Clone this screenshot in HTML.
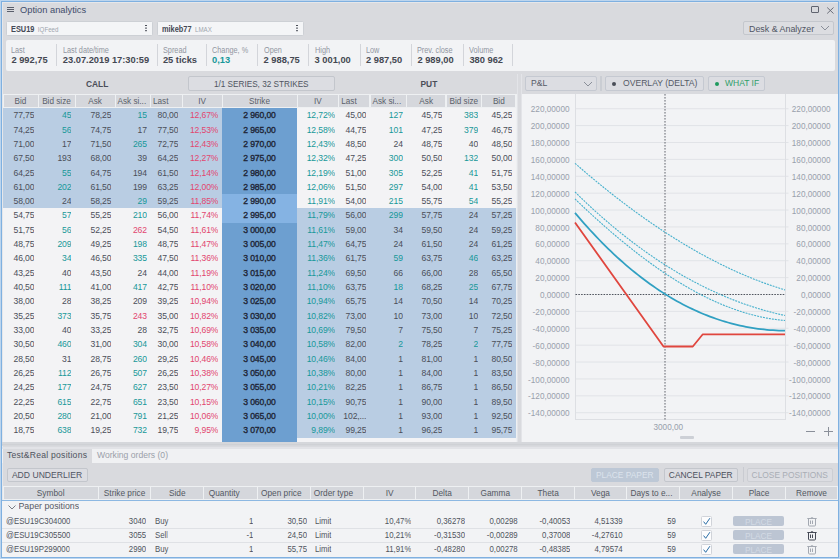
<!DOCTYPE html><html><head><meta charset="utf-8"><style>
*{margin:0;padding:0;box-sizing:border-box}
html,body{width:840px;height:559px;overflow:hidden;background:#d9dade;font-family:"Liberation Sans",sans-serif;color:#4b4f59}
.a{position:absolute}
.d{position:absolute;font-size:8.6px;letter-spacing:-0.12px;line-height:14.3px;height:14.3px;padding-top:0.2px;white-space:nowrap;overflow:hidden}
.h{position:absolute;font-size:8.2px;line-height:13px;height:12px;white-space:nowrap;overflow:hidden;color:#5a5f6a;text-align:center;background:#d5d7dc;}
.sl{position:absolute;font-size:8.3px;color:#9196a1;white-space:nowrap;transform:scaleX(0.88);transform-origin:left}
.sv{position:absolute;font-size:9.3px;font-weight:bold;color:#444852;white-space:nowrap}
.sep{position:absolute;width:1px;background:#d3d5da}
.btn{position:absolute;border:1px solid #c3c6cc;border-radius:2px;background:#dcdde2;font-size:8px;white-space:nowrap;text-align:center;color:#4f5460}
.ax{position:absolute;font-size:8.2px;color:#98a0ac;white-space:nowrap;line-height:10px}
.pd{position:absolute;font-size:8.6px;line-height:14px;height:14px;padding-top:0px;transform:scaleX(0.91);white-space:nowrap;overflow:hidden;color:#4f535d}
.ph{position:absolute;font-size:8.3px;line-height:12.5px;height:12.5px;white-space:nowrap;overflow:hidden;color:#535862;text-align:center;background:#d5d7dc}
</style></head><body>
<div class="a" style="left:0;top:0;width:840px;height:559px;border:1px solid #bcd5ee;"></div>
<div class="a" style="left:1px;top:1px;width:838px;height:557px;border:1px solid #7fb0e0;"></div>
<div class="a" style="left:2px;top:2px;width:836px;height:555px;border-left:1px solid #e6e7ea;border-top:1px solid #e6e7ea"></div>
<div class="a" style="left:7.2px;top:6.8px;width:6.7px;height:1px;background:#595e6b"></div>
<div class="a" style="left:7.2px;top:9px;width:6.7px;height:1px;background:#595e6b"></div>
<div class="a" style="left:7.2px;top:11px;width:6.7px;height:1px;background:#595e6b"></div>
<div class="a" style="left:20px;top:4px;font-size:9.3px;line-height:12px;color:#3f4d6b;white-space:nowrap">Option analytics</div>
<div class="a" style="left:811px;top:6px;width:7.5px;height:7.3px;border:1px solid #60646f;border-radius:1px"></div>
<svg class="a" style="left:826px;top:5.5px" width="9" height="9" viewBox="0 0 9 9"><path d="M1.2 1.5L7.5 7.5M7.5 1.5L1.2 7.5" stroke="#60646f" stroke-width="0.9"/></svg>
<div class="a" style="left:6.0px;top:21px;width:147.0px;height:15px;background:#f4f5f7;border:1px solid #cdd0d5;border-radius:1.5px"></div>
<div class="a" style="left:10.7px;top:23px;font-size:8.6px;line-height:12.5px;font-weight:bold;color:#454955;white-space:nowrap;transform:scaleX(0.86);transform-origin:left">ESU19<span style="font-weight:normal;font-size:7.2px;color:#a0a5ae;margin-left:4px">IQFeed</span></div>
<div class="a" style="left:145.0px;top:24.5px;width:1.5px;height:1.5px;background:#4a4e58;box-shadow:0 2.6px 0 #4a4e58,0 5.2px 0 #4a4e58"></div>
<div class="a" style="left:157.0px;top:21px;width:147.0px;height:15px;background:#f4f5f7;border:1px solid #cdd0d5;border-radius:1.5px"></div>
<div class="a" style="left:161.7px;top:23px;font-size:8.6px;line-height:12.5px;font-weight:bold;color:#454955;white-space:nowrap;transform:scaleX(0.86);transform-origin:left">mikeb77<span style="font-weight:normal;font-size:7.2px;color:#a0a5ae;margin-left:4px">LMAX</span></div>
<div class="a" style="left:296.0px;top:24.5px;width:1.5px;height:1.5px;background:#4a4e58;box-shadow:0 2.6px 0 #4a4e58,0 5.2px 0 #4a4e58"></div>
<div class="a" style="left:743px;top:21px;width:91px;height:14px;border:1px solid #c4c7cd;border-radius:2px;background:#dcdde1"></div>
<div class="a" style="left:749px;top:23.8px;font-size:8.9px;line-height:11px;color:#505563;white-space:nowrap">Desk &amp; Analyzer</div>
<svg class="a" style="left:820px;top:25px" width="10" height="6" viewBox="0 0 10 6"><path d="M1 1L5 5L9 1" fill="none" stroke="#8a8f99" stroke-width="1"/></svg>
<div class="a" style="left:5.5px;top:40px;width:829px;height:31px;background:#f2f3f5;border-radius:2px"></div>
<div class="sl" style="left:11.4px;top:45.7px;line-height:9px">Last</div>
<div class="sv" style="left:11.4px;top:54.5px;line-height:11px;">2 992,75</div>
<div class="sl" style="left:62.8px;top:45.7px;line-height:9px">Last date/time</div>
<div class="sv" style="left:62.8px;top:54.5px;line-height:11px;">23.07.2019 17:30:59</div>
<div class="sl" style="left:162.9px;top:45.7px;line-height:9px">Spread</div>
<div class="sv" style="left:162.9px;top:54.5px;line-height:11px;">25 ticks</div>
<div class="sl" style="left:212.1px;top:45.7px;line-height:9px">Change, %</div>
<div class="sv" style="left:212.1px;top:54.5px;line-height:11px;color:#179899;">0,13</div>
<div class="sl" style="left:263.6px;top:45.7px;line-height:9px">Open</div>
<div class="sv" style="left:263.6px;top:54.5px;line-height:11px;">2 988,75</div>
<div class="sl" style="left:314.6px;top:45.7px;line-height:9px">High</div>
<div class="sv" style="left:314.6px;top:54.5px;line-height:11px;">3 001,00</div>
<div class="sl" style="left:366px;top:45.7px;line-height:9px">Low</div>
<div class="sv" style="left:366px;top:54.5px;line-height:11px;">2 987,50</div>
<div class="sl" style="left:417.4px;top:45.7px;line-height:9px">Prev. close</div>
<div class="sv" style="left:417.4px;top:54.5px;line-height:11px;">2 989,00</div>
<div class="sl" style="left:469.4px;top:45.7px;line-height:9px">Volume</div>
<div class="sv" style="left:469.4px;top:54.5px;line-height:11px;">380 962</div>
<div class="sep" style="left:56.3px;top:44px;height:22px"></div>
<div class="sep" style="left:157.0px;top:44px;height:22px"></div>
<div class="sep" style="left:205.9px;top:44px;height:22px"></div>
<div class="sep" style="left:256.6px;top:44px;height:22px"></div>
<div class="sep" style="left:308.1px;top:44px;height:22px"></div>
<div class="sep" style="left:359.5px;top:44px;height:22px"></div>
<div class="sep" style="left:410.9px;top:44px;height:22px"></div>
<div class="sep" style="left:463.0px;top:44px;height:22px"></div>
<div class="sep" style="left:512.4px;top:44px;height:22px"></div>
<div class="a" style="left:86px;top:79px;font-size:8.4px;line-height:11px;font-weight:bold;color:#4a4e58">CALL</div>
<div class="btn" style="left:188px;top:76px;width:146.5px;height:14.5px;line-height:14px;padding-top:1px;font-size:8.2px">1/1 SERIES, 32 STRIKES</div>
<div class="a" style="left:420.5px;top:79px;font-size:8.4px;line-height:11px;font-weight:bold;color:#4a4e58">PUT</div>
<div class="a" style="left:3px;top:94px;width:514px;height:14px;background:#eef0f2"></div>
<div class="h" style="left:3.5px;width:34.0px;top:95px;text-align:center;">Bid</div>
<div class="h" style="left:38.5px;width:36.0px;top:95px;text-align:center;">Bid size</div>
<div class="h" style="left:75.5px;width:39.0px;top:95px;text-align:center;">Ask</div>
<div class="h" style="left:115.5px;width:34.5px;top:95px;text-align:left;padding-left:2px;">Ask si...</div>
<div class="h" style="left:151.0px;width:30.5px;top:95px;text-align:left;padding-left:2px;">Last</div>
<div class="h" style="left:182.5px;width:39.0px;top:95px;text-align:center;">IV</div>
<div class="h" style="left:222.5px;width:74.0px;top:95px;text-align:center;">Strike</div>
<div class="h" style="left:297.5px;width:40.7px;top:95px;text-align:center;">IV</div>
<div class="h" style="left:339.2px;width:30.3px;top:95px;text-align:left;padding-left:2px;">Last</div>
<div class="h" style="left:370.5px;width:35.4px;top:95px;text-align:left;padding-left:2px;">Ask si...</div>
<div class="h" style="left:406.9px;width:38.6px;top:95px;text-align:center;">Ask</div>
<div class="h" style="left:446.5px;width:34.7px;top:95px;text-align:center;">Bid size</div>
<div class="h" style="left:482.2px;width:33.3px;top:95px;text-align:center;">Bid</div>
<div class="a" style="left:3px;top:108.0px;width:514px;height:334.2px;background:#f3f3f5"></div>
<div class="a" style="left:3px;top:108.0px;width:219px;height:100.31px;background:#b9cde3"></div>
<div class="a" style="left:297px;top:208.31px;width:219px;height:229.28px;background:#b9cde3"></div>
<div class="a" style="left:222px;top:108.0px;width:75px;height:334.2px;background:#6d9fd0"></div>
<div class="a" style="left:222px;top:193.98px;width:75px;height:28.66px;background:#85b3e3"></div>
<div class="a" style="left:516px;top:94px;width:1px;height:348px;background:#eef0f2"></div>
<div class="d" style="left:3.0px;width:31.4px;top:108.00px;text-align:right;color:#4b4f59;">77,75</div>
<div class="d" style="left:38.0px;width:33.4px;top:108.00px;text-align:right;color:#179899;">45</div>
<div class="d" style="left:75.0px;width:36.4px;top:108.00px;text-align:right;color:#4b4f59;">78,25</div>
<div class="d" style="left:115.0px;width:31.9px;top:108.00px;text-align:right;color:#179899;">15</div>
<div class="d" style="left:150.5px;width:27.9px;top:108.00px;text-align:right;color:#4b4f59;">80,00</div>
<div class="d" style="left:182.0px;width:36.4px;top:108.00px;text-align:right;color:#e2466f;">12,67%</div>
<div class="d" style="left:222.0px;width:75.0px;top:108.00px;text-align:center;color:#1e2535;-webkit-text-stroke:0.35px #1e2535">2 960,00</div>
<div class="d" style="left:297.0px;width:38.1px;top:108.00px;text-align:right;color:#179899;">12,72%</div>
<div class="d" style="left:338.7px;width:27.7px;top:108.00px;text-align:right;color:#4b4f59;">45,00</div>
<div class="d" style="left:370.0px;width:32.8px;top:108.00px;text-align:right;color:#179899;">127</div>
<div class="d" style="left:406.4px;width:36.0px;top:108.00px;text-align:right;color:#4b4f59;">45,75</div>
<div class="d" style="left:446.0px;width:32.1px;top:108.00px;text-align:right;color:#179899;">383</div>
<div class="d" style="left:481.7px;width:30.7px;top:108.00px;text-align:right;color:#4b4f59;">45,25</div>
<div class="d" style="left:3.0px;width:31.4px;top:122.33px;text-align:right;color:#4b4f59;">74,25</div>
<div class="d" style="left:38.0px;width:33.4px;top:122.33px;text-align:right;color:#179899;">56</div>
<div class="d" style="left:75.0px;width:36.4px;top:122.33px;text-align:right;color:#4b4f59;">74,75</div>
<div class="d" style="left:115.0px;width:31.9px;top:122.33px;text-align:right;color:#4b4f59;">17</div>
<div class="d" style="left:150.5px;width:27.9px;top:122.33px;text-align:right;color:#4b4f59;">77,50</div>
<div class="d" style="left:182.0px;width:36.4px;top:122.33px;text-align:right;color:#e2466f;">12,53%</div>
<div class="d" style="left:222.0px;width:75.0px;top:122.33px;text-align:center;color:#1e2535;-webkit-text-stroke:0.35px #1e2535">2 965,00</div>
<div class="d" style="left:297.0px;width:38.1px;top:122.33px;text-align:right;color:#179899;">12,58%</div>
<div class="d" style="left:338.7px;width:27.7px;top:122.33px;text-align:right;color:#4b4f59;">44,75</div>
<div class="d" style="left:370.0px;width:32.8px;top:122.33px;text-align:right;color:#179899;">101</div>
<div class="d" style="left:406.4px;width:36.0px;top:122.33px;text-align:right;color:#4b4f59;">47,25</div>
<div class="d" style="left:446.0px;width:32.1px;top:122.33px;text-align:right;color:#179899;">379</div>
<div class="d" style="left:481.7px;width:30.7px;top:122.33px;text-align:right;color:#4b4f59;">46,75</div>
<div class="d" style="left:3.0px;width:31.4px;top:136.66px;text-align:right;color:#4b4f59;">71,00</div>
<div class="d" style="left:38.0px;width:33.4px;top:136.66px;text-align:right;color:#4b4f59;">17</div>
<div class="d" style="left:75.0px;width:36.4px;top:136.66px;text-align:right;color:#4b4f59;">71,50</div>
<div class="d" style="left:115.0px;width:31.9px;top:136.66px;text-align:right;color:#179899;">265</div>
<div class="d" style="left:150.5px;width:27.9px;top:136.66px;text-align:right;color:#4b4f59;">72,75</div>
<div class="d" style="left:182.0px;width:36.4px;top:136.66px;text-align:right;color:#e2466f;">12,43%</div>
<div class="d" style="left:222.0px;width:75.0px;top:136.66px;text-align:center;color:#1e2535;-webkit-text-stroke:0.35px #1e2535">2 970,00</div>
<div class="d" style="left:297.0px;width:38.1px;top:136.66px;text-align:right;color:#179899;">12,43%</div>
<div class="d" style="left:338.7px;width:27.7px;top:136.66px;text-align:right;color:#4b4f59;">48,50</div>
<div class="d" style="left:370.0px;width:32.8px;top:136.66px;text-align:right;color:#4b4f59;">24</div>
<div class="d" style="left:406.4px;width:36.0px;top:136.66px;text-align:right;color:#4b4f59;">48,75</div>
<div class="d" style="left:446.0px;width:32.1px;top:136.66px;text-align:right;color:#4b4f59;">40</div>
<div class="d" style="left:481.7px;width:30.7px;top:136.66px;text-align:right;color:#4b4f59;">48,50</div>
<div class="d" style="left:3.0px;width:31.4px;top:150.99px;text-align:right;color:#4b4f59;">67,50</div>
<div class="d" style="left:38.0px;width:33.4px;top:150.99px;text-align:right;color:#4b4f59;">193</div>
<div class="d" style="left:75.0px;width:36.4px;top:150.99px;text-align:right;color:#4b4f59;">68,00</div>
<div class="d" style="left:115.0px;width:31.9px;top:150.99px;text-align:right;color:#4b4f59;">39</div>
<div class="d" style="left:150.5px;width:27.9px;top:150.99px;text-align:right;color:#4b4f59;">64,25</div>
<div class="d" style="left:182.0px;width:36.4px;top:150.99px;text-align:right;color:#e2466f;">12,27%</div>
<div class="d" style="left:222.0px;width:75.0px;top:150.99px;text-align:center;color:#1e2535;-webkit-text-stroke:0.35px #1e2535">2 975,00</div>
<div class="d" style="left:297.0px;width:38.1px;top:150.99px;text-align:right;color:#179899;">12,32%</div>
<div class="d" style="left:338.7px;width:27.7px;top:150.99px;text-align:right;color:#4b4f59;">47,25</div>
<div class="d" style="left:370.0px;width:32.8px;top:150.99px;text-align:right;color:#179899;">300</div>
<div class="d" style="left:406.4px;width:36.0px;top:150.99px;text-align:right;color:#4b4f59;">50,50</div>
<div class="d" style="left:446.0px;width:32.1px;top:150.99px;text-align:right;color:#179899;">132</div>
<div class="d" style="left:481.7px;width:30.7px;top:150.99px;text-align:right;color:#4b4f59;">50,00</div>
<div class="d" style="left:3.0px;width:31.4px;top:165.32px;text-align:right;color:#4b4f59;">64,25</div>
<div class="d" style="left:38.0px;width:33.4px;top:165.32px;text-align:right;color:#179899;">55</div>
<div class="d" style="left:75.0px;width:36.4px;top:165.32px;text-align:right;color:#4b4f59;">64,75</div>
<div class="d" style="left:115.0px;width:31.9px;top:165.32px;text-align:right;color:#4b4f59;">194</div>
<div class="d" style="left:150.5px;width:27.9px;top:165.32px;text-align:right;color:#4b4f59;">61,50</div>
<div class="d" style="left:182.0px;width:36.4px;top:165.32px;text-align:right;color:#e2466f;">12,14%</div>
<div class="d" style="left:222.0px;width:75.0px;top:165.32px;text-align:center;color:#1e2535;-webkit-text-stroke:0.35px #1e2535">2 980,00</div>
<div class="d" style="left:297.0px;width:38.1px;top:165.32px;text-align:right;color:#179899;">12,19%</div>
<div class="d" style="left:338.7px;width:27.7px;top:165.32px;text-align:right;color:#4b4f59;">51,00</div>
<div class="d" style="left:370.0px;width:32.8px;top:165.32px;text-align:right;color:#179899;">305</div>
<div class="d" style="left:406.4px;width:36.0px;top:165.32px;text-align:right;color:#4b4f59;">52,25</div>
<div class="d" style="left:446.0px;width:32.1px;top:165.32px;text-align:right;color:#179899;">41</div>
<div class="d" style="left:481.7px;width:30.7px;top:165.32px;text-align:right;color:#4b4f59;">51,75</div>
<div class="d" style="left:3.0px;width:31.4px;top:179.65px;text-align:right;color:#4b4f59;">61,00</div>
<div class="d" style="left:38.0px;width:33.4px;top:179.65px;text-align:right;color:#179899;">202</div>
<div class="d" style="left:75.0px;width:36.4px;top:179.65px;text-align:right;color:#4b4f59;">61,50</div>
<div class="d" style="left:115.0px;width:31.9px;top:179.65px;text-align:right;color:#4b4f59;">199</div>
<div class="d" style="left:150.5px;width:27.9px;top:179.65px;text-align:right;color:#4b4f59;">63,25</div>
<div class="d" style="left:182.0px;width:36.4px;top:179.65px;text-align:right;color:#e2466f;">12,00%</div>
<div class="d" style="left:222.0px;width:75.0px;top:179.65px;text-align:center;color:#1e2535;-webkit-text-stroke:0.35px #1e2535">2 985,00</div>
<div class="d" style="left:297.0px;width:38.1px;top:179.65px;text-align:right;color:#179899;">12,06%</div>
<div class="d" style="left:338.7px;width:27.7px;top:179.65px;text-align:right;color:#4b4f59;">51,50</div>
<div class="d" style="left:370.0px;width:32.8px;top:179.65px;text-align:right;color:#179899;">297</div>
<div class="d" style="left:406.4px;width:36.0px;top:179.65px;text-align:right;color:#4b4f59;">54,00</div>
<div class="d" style="left:446.0px;width:32.1px;top:179.65px;text-align:right;color:#179899;">41</div>
<div class="d" style="left:481.7px;width:30.7px;top:179.65px;text-align:right;color:#4b4f59;">53,50</div>
<div class="d" style="left:3.0px;width:31.4px;top:193.98px;text-align:right;color:#4b4f59;">58,00</div>
<div class="d" style="left:38.0px;width:33.4px;top:193.98px;text-align:right;color:#4b4f59;">24</div>
<div class="d" style="left:75.0px;width:36.4px;top:193.98px;text-align:right;color:#4b4f59;">58,25</div>
<div class="d" style="left:115.0px;width:31.9px;top:193.98px;text-align:right;color:#179899;">29</div>
<div class="d" style="left:150.5px;width:27.9px;top:193.98px;text-align:right;color:#4b4f59;">59,25</div>
<div class="d" style="left:182.0px;width:36.4px;top:193.98px;text-align:right;color:#e2466f;">11,85%</div>
<div class="d" style="left:222.0px;width:75.0px;top:193.98px;text-align:center;color:#1e2535;-webkit-text-stroke:0.35px #1e2535">2 990,00</div>
<div class="d" style="left:297.0px;width:38.1px;top:193.98px;text-align:right;color:#179899;">11,91%</div>
<div class="d" style="left:338.7px;width:27.7px;top:193.98px;text-align:right;color:#4b4f59;">54,00</div>
<div class="d" style="left:370.0px;width:32.8px;top:193.98px;text-align:right;color:#179899;">215</div>
<div class="d" style="left:406.4px;width:36.0px;top:193.98px;text-align:right;color:#4b4f59;">55,75</div>
<div class="d" style="left:446.0px;width:32.1px;top:193.98px;text-align:right;color:#179899;">54</div>
<div class="d" style="left:481.7px;width:30.7px;top:193.98px;text-align:right;color:#4b4f59;">55,25</div>
<div class="d" style="left:3.0px;width:31.4px;top:208.31px;text-align:right;color:#4b4f59;">54,75</div>
<div class="d" style="left:38.0px;width:33.4px;top:208.31px;text-align:right;color:#179899;">57</div>
<div class="d" style="left:75.0px;width:36.4px;top:208.31px;text-align:right;color:#4b4f59;">55,25</div>
<div class="d" style="left:115.0px;width:31.9px;top:208.31px;text-align:right;color:#179899;">210</div>
<div class="d" style="left:150.5px;width:27.9px;top:208.31px;text-align:right;color:#4b4f59;">56,00</div>
<div class="d" style="left:182.0px;width:36.4px;top:208.31px;text-align:right;color:#e2466f;">11,74%</div>
<div class="d" style="left:222.0px;width:75.0px;top:208.31px;text-align:center;color:#1e2535;-webkit-text-stroke:0.35px #1e2535">2 995,00</div>
<div class="d" style="left:297.0px;width:38.1px;top:208.31px;text-align:right;color:#179899;">11,79%</div>
<div class="d" style="left:338.7px;width:27.7px;top:208.31px;text-align:right;color:#4b4f59;">56,00</div>
<div class="d" style="left:370.0px;width:32.8px;top:208.31px;text-align:right;color:#179899;">299</div>
<div class="d" style="left:406.4px;width:36.0px;top:208.31px;text-align:right;color:#4b4f59;">57,75</div>
<div class="d" style="left:446.0px;width:32.1px;top:208.31px;text-align:right;color:#4b4f59;">24</div>
<div class="d" style="left:481.7px;width:30.7px;top:208.31px;text-align:right;color:#4b4f59;">57,25</div>
<div class="d" style="left:3.0px;width:31.4px;top:222.64px;text-align:right;color:#4b4f59;">51,75</div>
<div class="d" style="left:38.0px;width:33.4px;top:222.64px;text-align:right;color:#179899;">56</div>
<div class="d" style="left:75.0px;width:36.4px;top:222.64px;text-align:right;color:#4b4f59;">52,25</div>
<div class="d" style="left:115.0px;width:31.9px;top:222.64px;text-align:right;color:#e2466f;">262</div>
<div class="d" style="left:150.5px;width:27.9px;top:222.64px;text-align:right;color:#4b4f59;">54,50</div>
<div class="d" style="left:182.0px;width:36.4px;top:222.64px;text-align:right;color:#e2466f;">11,61%</div>
<div class="d" style="left:222.0px;width:75.0px;top:222.64px;text-align:center;color:#1e2535;-webkit-text-stroke:0.35px #1e2535">3 000,00</div>
<div class="d" style="left:297.0px;width:38.1px;top:222.64px;text-align:right;color:#179899;">11,61%</div>
<div class="d" style="left:338.7px;width:27.7px;top:222.64px;text-align:right;color:#4b4f59;">59,00</div>
<div class="d" style="left:370.0px;width:32.8px;top:222.64px;text-align:right;color:#4b4f59;">34</div>
<div class="d" style="left:406.4px;width:36.0px;top:222.64px;text-align:right;color:#4b4f59;">59,50</div>
<div class="d" style="left:446.0px;width:32.1px;top:222.64px;text-align:right;color:#4b4f59;">24</div>
<div class="d" style="left:481.7px;width:30.7px;top:222.64px;text-align:right;color:#4b4f59;">59,25</div>
<div class="d" style="left:3.0px;width:31.4px;top:236.97px;text-align:right;color:#4b4f59;">48,75</div>
<div class="d" style="left:38.0px;width:33.4px;top:236.97px;text-align:right;color:#179899;">209</div>
<div class="d" style="left:75.0px;width:36.4px;top:236.97px;text-align:right;color:#4b4f59;">49,25</div>
<div class="d" style="left:115.0px;width:31.9px;top:236.97px;text-align:right;color:#179899;">198</div>
<div class="d" style="left:150.5px;width:27.9px;top:236.97px;text-align:right;color:#4b4f59;">48,75</div>
<div class="d" style="left:182.0px;width:36.4px;top:236.97px;text-align:right;color:#e2466f;">11,47%</div>
<div class="d" style="left:222.0px;width:75.0px;top:236.97px;text-align:center;color:#1e2535;-webkit-text-stroke:0.35px #1e2535">3 005,00</div>
<div class="d" style="left:297.0px;width:38.1px;top:236.97px;text-align:right;color:#179899;">11,47%</div>
<div class="d" style="left:338.7px;width:27.7px;top:236.97px;text-align:right;color:#4b4f59;">64,75</div>
<div class="d" style="left:370.0px;width:32.8px;top:236.97px;text-align:right;color:#4b4f59;">24</div>
<div class="d" style="left:406.4px;width:36.0px;top:236.97px;text-align:right;color:#4b4f59;">61,50</div>
<div class="d" style="left:446.0px;width:32.1px;top:236.97px;text-align:right;color:#4b4f59;">24</div>
<div class="d" style="left:481.7px;width:30.7px;top:236.97px;text-align:right;color:#4b4f59;">61,25</div>
<div class="d" style="left:3.0px;width:31.4px;top:251.30px;text-align:right;color:#4b4f59;">46,00</div>
<div class="d" style="left:38.0px;width:33.4px;top:251.30px;text-align:right;color:#179899;">34</div>
<div class="d" style="left:75.0px;width:36.4px;top:251.30px;text-align:right;color:#4b4f59;">46,50</div>
<div class="d" style="left:115.0px;width:31.9px;top:251.30px;text-align:right;color:#179899;">335</div>
<div class="d" style="left:150.5px;width:27.9px;top:251.30px;text-align:right;color:#4b4f59;">47,50</div>
<div class="d" style="left:182.0px;width:36.4px;top:251.30px;text-align:right;color:#e2466f;">11,36%</div>
<div class="d" style="left:222.0px;width:75.0px;top:251.30px;text-align:center;color:#1e2535;-webkit-text-stroke:0.35px #1e2535">3 010,00</div>
<div class="d" style="left:297.0px;width:38.1px;top:251.30px;text-align:right;color:#179899;">11,36%</div>
<div class="d" style="left:338.7px;width:27.7px;top:251.30px;text-align:right;color:#4b4f59;">61,75</div>
<div class="d" style="left:370.0px;width:32.8px;top:251.30px;text-align:right;color:#179899;">59</div>
<div class="d" style="left:406.4px;width:36.0px;top:251.30px;text-align:right;color:#4b4f59;">63,75</div>
<div class="d" style="left:446.0px;width:32.1px;top:251.30px;text-align:right;color:#179899;">46</div>
<div class="d" style="left:481.7px;width:30.7px;top:251.30px;text-align:right;color:#4b4f59;">63,25</div>
<div class="d" style="left:3.0px;width:31.4px;top:265.63px;text-align:right;color:#4b4f59;">43,25</div>
<div class="d" style="left:38.0px;width:33.4px;top:265.63px;text-align:right;color:#4b4f59;">40</div>
<div class="d" style="left:75.0px;width:36.4px;top:265.63px;text-align:right;color:#4b4f59;">43,50</div>
<div class="d" style="left:115.0px;width:31.9px;top:265.63px;text-align:right;color:#4b4f59;">24</div>
<div class="d" style="left:150.5px;width:27.9px;top:265.63px;text-align:right;color:#4b4f59;">44,00</div>
<div class="d" style="left:182.0px;width:36.4px;top:265.63px;text-align:right;color:#e2466f;">11,19%</div>
<div class="d" style="left:222.0px;width:75.0px;top:265.63px;text-align:center;color:#1e2535;-webkit-text-stroke:0.35px #1e2535">3 015,00</div>
<div class="d" style="left:297.0px;width:38.1px;top:265.63px;text-align:right;color:#179899;">11,24%</div>
<div class="d" style="left:338.7px;width:27.7px;top:265.63px;text-align:right;color:#4b4f59;">69,50</div>
<div class="d" style="left:370.0px;width:32.8px;top:265.63px;text-align:right;color:#4b4f59;">66</div>
<div class="d" style="left:406.4px;width:36.0px;top:265.63px;text-align:right;color:#4b4f59;">66,00</div>
<div class="d" style="left:446.0px;width:32.1px;top:265.63px;text-align:right;color:#4b4f59;">28</div>
<div class="d" style="left:481.7px;width:30.7px;top:265.63px;text-align:right;color:#4b4f59;">65,50</div>
<div class="d" style="left:3.0px;width:31.4px;top:279.96px;text-align:right;color:#4b4f59;">40,50</div>
<div class="d" style="left:38.0px;width:33.4px;top:279.96px;text-align:right;color:#179899;">111</div>
<div class="d" style="left:75.0px;width:36.4px;top:279.96px;text-align:right;color:#4b4f59;">41,00</div>
<div class="d" style="left:115.0px;width:31.9px;top:279.96px;text-align:right;color:#179899;">417</div>
<div class="d" style="left:150.5px;width:27.9px;top:279.96px;text-align:right;color:#4b4f59;">42,75</div>
<div class="d" style="left:182.0px;width:36.4px;top:279.96px;text-align:right;color:#e2466f;">11,10%</div>
<div class="d" style="left:222.0px;width:75.0px;top:279.96px;text-align:center;color:#1e2535;-webkit-text-stroke:0.35px #1e2535">3 020,00</div>
<div class="d" style="left:297.0px;width:38.1px;top:279.96px;text-align:right;color:#179899;">11,10%</div>
<div class="d" style="left:338.7px;width:27.7px;top:279.96px;text-align:right;color:#4b4f59;">63,75</div>
<div class="d" style="left:370.0px;width:32.8px;top:279.96px;text-align:right;color:#179899;">18</div>
<div class="d" style="left:406.4px;width:36.0px;top:279.96px;text-align:right;color:#4b4f59;">68,25</div>
<div class="d" style="left:446.0px;width:32.1px;top:279.96px;text-align:right;color:#179899;">25</div>
<div class="d" style="left:481.7px;width:30.7px;top:279.96px;text-align:right;color:#4b4f59;">67,75</div>
<div class="d" style="left:3.0px;width:31.4px;top:294.29px;text-align:right;color:#4b4f59;">38,00</div>
<div class="d" style="left:38.0px;width:33.4px;top:294.29px;text-align:right;color:#4b4f59;">28</div>
<div class="d" style="left:75.0px;width:36.4px;top:294.29px;text-align:right;color:#4b4f59;">38,25</div>
<div class="d" style="left:115.0px;width:31.9px;top:294.29px;text-align:right;color:#4b4f59;">209</div>
<div class="d" style="left:150.5px;width:27.9px;top:294.29px;text-align:right;color:#4b4f59;">39,25</div>
<div class="d" style="left:182.0px;width:36.4px;top:294.29px;text-align:right;color:#e2466f;">10,94%</div>
<div class="d" style="left:222.0px;width:75.0px;top:294.29px;text-align:center;color:#1e2535;-webkit-text-stroke:0.35px #1e2535">3 025,00</div>
<div class="d" style="left:297.0px;width:38.1px;top:294.29px;text-align:right;color:#179899;">10,94%</div>
<div class="d" style="left:338.7px;width:27.7px;top:294.29px;text-align:right;color:#4b4f59;">65,75</div>
<div class="d" style="left:370.0px;width:32.8px;top:294.29px;text-align:right;color:#4b4f59;">14</div>
<div class="d" style="left:406.4px;width:36.0px;top:294.29px;text-align:right;color:#4b4f59;">70,50</div>
<div class="d" style="left:446.0px;width:32.1px;top:294.29px;text-align:right;color:#4b4f59;">14</div>
<div class="d" style="left:481.7px;width:30.7px;top:294.29px;text-align:right;color:#4b4f59;">70,25</div>
<div class="d" style="left:3.0px;width:31.4px;top:308.62px;text-align:right;color:#4b4f59;">35,25</div>
<div class="d" style="left:38.0px;width:33.4px;top:308.62px;text-align:right;color:#179899;">373</div>
<div class="d" style="left:75.0px;width:36.4px;top:308.62px;text-align:right;color:#4b4f59;">35,75</div>
<div class="d" style="left:115.0px;width:31.9px;top:308.62px;text-align:right;color:#e2466f;">243</div>
<div class="d" style="left:150.5px;width:27.9px;top:308.62px;text-align:right;color:#4b4f59;">35,00</div>
<div class="d" style="left:182.0px;width:36.4px;top:308.62px;text-align:right;color:#e2466f;">10,82%</div>
<div class="d" style="left:222.0px;width:75.0px;top:308.62px;text-align:center;color:#1e2535;-webkit-text-stroke:0.35px #1e2535">3 030,00</div>
<div class="d" style="left:297.0px;width:38.1px;top:308.62px;text-align:right;color:#179899;">10,82%</div>
<div class="d" style="left:338.7px;width:27.7px;top:308.62px;text-align:right;color:#4b4f59;">73,00</div>
<div class="d" style="left:370.0px;width:32.8px;top:308.62px;text-align:right;color:#4b4f59;">10</div>
<div class="d" style="left:406.4px;width:36.0px;top:308.62px;text-align:right;color:#4b4f59;">73,00</div>
<div class="d" style="left:446.0px;width:32.1px;top:308.62px;text-align:right;color:#4b4f59;">10</div>
<div class="d" style="left:481.7px;width:30.7px;top:308.62px;text-align:right;color:#4b4f59;">72,50</div>
<div class="d" style="left:3.0px;width:31.4px;top:322.95px;text-align:right;color:#4b4f59;">33,00</div>
<div class="d" style="left:38.0px;width:33.4px;top:322.95px;text-align:right;color:#4b4f59;">40</div>
<div class="d" style="left:75.0px;width:36.4px;top:322.95px;text-align:right;color:#4b4f59;">33,25</div>
<div class="d" style="left:115.0px;width:31.9px;top:322.95px;text-align:right;color:#4b4f59;">28</div>
<div class="d" style="left:150.5px;width:27.9px;top:322.95px;text-align:right;color:#4b4f59;">32,75</div>
<div class="d" style="left:182.0px;width:36.4px;top:322.95px;text-align:right;color:#e2466f;">10,69%</div>
<div class="d" style="left:222.0px;width:75.0px;top:322.95px;text-align:center;color:#1e2535;-webkit-text-stroke:0.35px #1e2535">3 035,00</div>
<div class="d" style="left:297.0px;width:38.1px;top:322.95px;text-align:right;color:#179899;">10,69%</div>
<div class="d" style="left:338.7px;width:27.7px;top:322.95px;text-align:right;color:#4b4f59;">79,50</div>
<div class="d" style="left:370.0px;width:32.8px;top:322.95px;text-align:right;color:#4b4f59;">7</div>
<div class="d" style="left:406.4px;width:36.0px;top:322.95px;text-align:right;color:#4b4f59;">75,50</div>
<div class="d" style="left:446.0px;width:32.1px;top:322.95px;text-align:right;color:#4b4f59;">7</div>
<div class="d" style="left:481.7px;width:30.7px;top:322.95px;text-align:right;color:#4b4f59;">75,25</div>
<div class="d" style="left:3.0px;width:31.4px;top:337.28px;text-align:right;color:#4b4f59;">30,50</div>
<div class="d" style="left:38.0px;width:33.4px;top:337.28px;text-align:right;color:#179899;">460</div>
<div class="d" style="left:75.0px;width:36.4px;top:337.28px;text-align:right;color:#4b4f59;">31,00</div>
<div class="d" style="left:115.0px;width:31.9px;top:337.28px;text-align:right;color:#179899;">304</div>
<div class="d" style="left:150.5px;width:27.9px;top:337.28px;text-align:right;color:#4b4f59;">30,00</div>
<div class="d" style="left:182.0px;width:36.4px;top:337.28px;text-align:right;color:#e2466f;">10,58%</div>
<div class="d" style="left:222.0px;width:75.0px;top:337.28px;text-align:center;color:#1e2535;-webkit-text-stroke:0.35px #1e2535">3 040,00</div>
<div class="d" style="left:297.0px;width:38.1px;top:337.28px;text-align:right;color:#179899;">10,58%</div>
<div class="d" style="left:338.7px;width:27.7px;top:337.28px;text-align:right;color:#4b4f59;">82,00</div>
<div class="d" style="left:370.0px;width:32.8px;top:337.28px;text-align:right;color:#179899;">2</div>
<div class="d" style="left:406.4px;width:36.0px;top:337.28px;text-align:right;color:#4b4f59;">78,25</div>
<div class="d" style="left:446.0px;width:32.1px;top:337.28px;text-align:right;color:#179899;">2</div>
<div class="d" style="left:481.7px;width:30.7px;top:337.28px;text-align:right;color:#4b4f59;">77,75</div>
<div class="d" style="left:3.0px;width:31.4px;top:351.61px;text-align:right;color:#4b4f59;">28,50</div>
<div class="d" style="left:38.0px;width:33.4px;top:351.61px;text-align:right;color:#4b4f59;">31</div>
<div class="d" style="left:75.0px;width:36.4px;top:351.61px;text-align:right;color:#4b4f59;">28,75</div>
<div class="d" style="left:115.0px;width:31.9px;top:351.61px;text-align:right;color:#179899;">260</div>
<div class="d" style="left:150.5px;width:27.9px;top:351.61px;text-align:right;color:#4b4f59;">29,25</div>
<div class="d" style="left:182.0px;width:36.4px;top:351.61px;text-align:right;color:#e2466f;">10,46%</div>
<div class="d" style="left:222.0px;width:75.0px;top:351.61px;text-align:center;color:#1e2535;-webkit-text-stroke:0.35px #1e2535">3 045,00</div>
<div class="d" style="left:297.0px;width:38.1px;top:351.61px;text-align:right;color:#179899;">10,46%</div>
<div class="d" style="left:338.7px;width:27.7px;top:351.61px;text-align:right;color:#4b4f59;">84,00</div>
<div class="d" style="left:370.0px;width:32.8px;top:351.61px;text-align:right;color:#4b4f59;">1</div>
<div class="d" style="left:406.4px;width:36.0px;top:351.61px;text-align:right;color:#4b4f59;">81,00</div>
<div class="d" style="left:446.0px;width:32.1px;top:351.61px;text-align:right;color:#4b4f59;">1</div>
<div class="d" style="left:481.7px;width:30.7px;top:351.61px;text-align:right;color:#4b4f59;">80,50</div>
<div class="d" style="left:3.0px;width:31.4px;top:365.94px;text-align:right;color:#4b4f59;">26,25</div>
<div class="d" style="left:38.0px;width:33.4px;top:365.94px;text-align:right;color:#179899;">112</div>
<div class="d" style="left:75.0px;width:36.4px;top:365.94px;text-align:right;color:#4b4f59;">26,75</div>
<div class="d" style="left:115.0px;width:31.9px;top:365.94px;text-align:right;color:#179899;">507</div>
<div class="d" style="left:150.5px;width:27.9px;top:365.94px;text-align:right;color:#4b4f59;">26,25</div>
<div class="d" style="left:182.0px;width:36.4px;top:365.94px;text-align:right;color:#e2466f;">10,38%</div>
<div class="d" style="left:222.0px;width:75.0px;top:365.94px;text-align:center;color:#1e2535;-webkit-text-stroke:0.35px #1e2535">3 050,00</div>
<div class="d" style="left:297.0px;width:38.1px;top:365.94px;text-align:right;color:#179899;">10,38%</div>
<div class="d" style="left:338.7px;width:27.7px;top:365.94px;text-align:right;color:#4b4f59;">80,00</div>
<div class="d" style="left:370.0px;width:32.8px;top:365.94px;text-align:right;color:#4b4f59;">1</div>
<div class="d" style="left:406.4px;width:36.0px;top:365.94px;text-align:right;color:#4b4f59;">84,00</div>
<div class="d" style="left:446.0px;width:32.1px;top:365.94px;text-align:right;color:#4b4f59;">1</div>
<div class="d" style="left:481.7px;width:30.7px;top:365.94px;text-align:right;color:#4b4f59;">83,50</div>
<div class="d" style="left:3.0px;width:31.4px;top:380.27px;text-align:right;color:#4b4f59;">24,25</div>
<div class="d" style="left:38.0px;width:33.4px;top:380.27px;text-align:right;color:#179899;">177</div>
<div class="d" style="left:75.0px;width:36.4px;top:380.27px;text-align:right;color:#4b4f59;">24,75</div>
<div class="d" style="left:115.0px;width:31.9px;top:380.27px;text-align:right;color:#179899;">627</div>
<div class="d" style="left:150.5px;width:27.9px;top:380.27px;text-align:right;color:#4b4f59;">23,50</div>
<div class="d" style="left:182.0px;width:36.4px;top:380.27px;text-align:right;color:#e2466f;">10,27%</div>
<div class="d" style="left:222.0px;width:75.0px;top:380.27px;text-align:center;color:#1e2535;-webkit-text-stroke:0.35px #1e2535">3 055,00</div>
<div class="d" style="left:297.0px;width:38.1px;top:380.27px;text-align:right;color:#179899;">10,21%</div>
<div class="d" style="left:338.7px;width:27.7px;top:380.27px;text-align:right;color:#4b4f59;">82,25</div>
<div class="d" style="left:370.0px;width:32.8px;top:380.27px;text-align:right;color:#4b4f59;">1</div>
<div class="d" style="left:406.4px;width:36.0px;top:380.27px;text-align:right;color:#4b4f59;">86,75</div>
<div class="d" style="left:446.0px;width:32.1px;top:380.27px;text-align:right;color:#4b4f59;">1</div>
<div class="d" style="left:481.7px;width:30.7px;top:380.27px;text-align:right;color:#4b4f59;">86,50</div>
<div class="d" style="left:3.0px;width:31.4px;top:394.60px;text-align:right;color:#4b4f59;">22,25</div>
<div class="d" style="left:38.0px;width:33.4px;top:394.60px;text-align:right;color:#179899;">615</div>
<div class="d" style="left:75.0px;width:36.4px;top:394.60px;text-align:right;color:#4b4f59;">22,75</div>
<div class="d" style="left:115.0px;width:31.9px;top:394.60px;text-align:right;color:#179899;">651</div>
<div class="d" style="left:150.5px;width:27.9px;top:394.60px;text-align:right;color:#4b4f59;">23,50</div>
<div class="d" style="left:182.0px;width:36.4px;top:394.60px;text-align:right;color:#e2466f;">10,15%</div>
<div class="d" style="left:222.0px;width:75.0px;top:394.60px;text-align:center;color:#1e2535;-webkit-text-stroke:0.35px #1e2535">3 060,00</div>
<div class="d" style="left:297.0px;width:38.1px;top:394.60px;text-align:right;color:#179899;">10,15%</div>
<div class="d" style="left:338.7px;width:27.7px;top:394.60px;text-align:right;color:#4b4f59;">90,75</div>
<div class="d" style="left:370.0px;width:32.8px;top:394.60px;text-align:right;color:#4b4f59;">1</div>
<div class="d" style="left:406.4px;width:36.0px;top:394.60px;text-align:right;color:#4b4f59;">90,00</div>
<div class="d" style="left:446.0px;width:32.1px;top:394.60px;text-align:right;color:#4b4f59;">1</div>
<div class="d" style="left:481.7px;width:30.7px;top:394.60px;text-align:right;color:#4b4f59;">89,50</div>
<div class="d" style="left:3.0px;width:31.4px;top:408.93px;text-align:right;color:#4b4f59;">20,50</div>
<div class="d" style="left:38.0px;width:33.4px;top:408.93px;text-align:right;color:#179899;">280</div>
<div class="d" style="left:75.0px;width:36.4px;top:408.93px;text-align:right;color:#4b4f59;">21,00</div>
<div class="d" style="left:115.0px;width:31.9px;top:408.93px;text-align:right;color:#179899;">791</div>
<div class="d" style="left:150.5px;width:27.9px;top:408.93px;text-align:right;color:#4b4f59;">21,25</div>
<div class="d" style="left:182.0px;width:36.4px;top:408.93px;text-align:right;color:#e2466f;">10,06%</div>
<div class="d" style="left:222.0px;width:75.0px;top:408.93px;text-align:center;color:#1e2535;-webkit-text-stroke:0.35px #1e2535">3 065,00</div>
<div class="d" style="left:297.0px;width:38.1px;top:408.93px;text-align:right;color:#179899;">10,00%</div>
<div class="d" style="left:338.7px;width:27.7px;top:408.93px;text-align:right;color:#4b4f59;">102,...</div>
<div class="d" style="left:370.0px;width:32.8px;top:408.93px;text-align:right;color:#4b4f59;">1</div>
<div class="d" style="left:406.4px;width:36.0px;top:408.93px;text-align:right;color:#4b4f59;">93,00</div>
<div class="d" style="left:446.0px;width:32.1px;top:408.93px;text-align:right;color:#4b4f59;">1</div>
<div class="d" style="left:481.7px;width:30.7px;top:408.93px;text-align:right;color:#4b4f59;">92,50</div>
<div class="d" style="left:3.0px;width:31.4px;top:423.26px;text-align:right;color:#4b4f59;">18,75</div>
<div class="d" style="left:38.0px;width:33.4px;top:423.26px;text-align:right;color:#179899;">638</div>
<div class="d" style="left:75.0px;width:36.4px;top:423.26px;text-align:right;color:#4b4f59;">19,25</div>
<div class="d" style="left:115.0px;width:31.9px;top:423.26px;text-align:right;color:#179899;">732</div>
<div class="d" style="left:150.5px;width:27.9px;top:423.26px;text-align:right;color:#4b4f59;">19,75</div>
<div class="d" style="left:182.0px;width:36.4px;top:423.26px;text-align:right;color:#e2466f;">9,95%</div>
<div class="d" style="left:222.0px;width:75.0px;top:423.26px;text-align:center;color:#1e2535;-webkit-text-stroke:0.35px #1e2535">3 070,00</div>
<div class="d" style="left:297.0px;width:38.1px;top:423.26px;text-align:right;color:#179899;">9,89%</div>
<div class="d" style="left:338.7px;width:27.7px;top:423.26px;text-align:right;color:#4b4f59;">99,25</div>
<div class="d" style="left:370.0px;width:32.8px;top:423.26px;text-align:right;color:#4b4f59;">1</div>
<div class="d" style="left:406.4px;width:36.0px;top:423.26px;text-align:right;color:#4b4f59;">96,25</div>
<div class="d" style="left:446.0px;width:32.1px;top:423.26px;text-align:right;color:#4b4f59;">1</div>
<div class="d" style="left:481.7px;width:30.7px;top:423.26px;text-align:right;color:#4b4f59;">95,75</div>
<div class="a" style="left:517px;top:74px;width:1px;height:368px;background:#e3e4e8"></div>
<div class="a" style="left:520.5px;top:74px;width:1px;height:368px;background:#e3e4e8"></div>
<div class="a" style="left:522px;top:72px;width:316px;height:21.5px;background:#d9dade"></div>
<div class="btn" style="left:525px;top:76px;width:71.5px;height:14.5px;line-height:12.5px;text-align:left;padding-left:5px;font-size:8.6px;color:#555a66;border-color:#c5c9d1">P&amp;L</div>
<svg class="a" style="left:583px;top:80.5px" width="10" height="6" viewBox="0 0 10 6"><path d="M1 1L5 5L9 1" fill="none" stroke="#8a8f99" stroke-width="1"/></svg>
<div class="a" style="left:600px;top:76px;width:1.5px;height:15px;background:#cacdd3"></div>
<div class="btn" style="left:605px;top:76px;width:98.5px;height:14.5px;line-height:12.5px;font-size:8.6px;text-align:left;padding-left:17px;color:#555a66;border-color:#c5c9d1">OVERLAY (DELTA)</div>
<div class="a" style="left:612px;top:81.6px;width:4.2px;height:4.2px;border-radius:50%;background:#4a4e58"></div>
<div class="btn" style="left:708px;top:76px;width:57px;height:14.5px;line-height:12.5px;font-size:8.5px;text-align:left;padding-left:16px;color:#2e9d6a;border-color:#c5c9d1">WHAT IF</div>
<div class="a" style="left:715px;top:81.5px;width:4px;height:4px;border-radius:50%;background:#1f9a5e"></div>
<div class="a" style="left:522px;top:93.5px;width:316px;height:348.7px;background:#f2f3f5"></div>
<svg class="a" style="left:0;top:0" width="840" height="559" viewBox="0 0 840 559"><line x1="575.5" y1="108.71" x2="788.5" y2="108.71" stroke="#e1e3e7" stroke-width="1"/><line x1="575.5" y1="125.60" x2="788.5" y2="125.60" stroke="#e1e3e7" stroke-width="1"/><line x1="575.5" y1="142.49" x2="788.5" y2="142.49" stroke="#e1e3e7" stroke-width="1"/><line x1="575.5" y1="159.38" x2="788.5" y2="159.38" stroke="#e1e3e7" stroke-width="1"/><line x1="575.5" y1="176.27" x2="788.5" y2="176.27" stroke="#e1e3e7" stroke-width="1"/><line x1="575.5" y1="193.16" x2="788.5" y2="193.16" stroke="#e1e3e7" stroke-width="1"/><line x1="575.5" y1="210.05" x2="788.5" y2="210.05" stroke="#e1e3e7" stroke-width="1"/><line x1="575.5" y1="226.94" x2="788.5" y2="226.94" stroke="#e1e3e7" stroke-width="1"/><line x1="575.5" y1="243.83" x2="788.5" y2="243.83" stroke="#e1e3e7" stroke-width="1"/><line x1="575.5" y1="260.72" x2="788.5" y2="260.72" stroke="#e1e3e7" stroke-width="1"/><line x1="575.5" y1="277.61" x2="788.5" y2="277.61" stroke="#e1e3e7" stroke-width="1"/><line x1="575.5" y1="311.39" x2="788.5" y2="311.39" stroke="#e1e3e7" stroke-width="1"/><line x1="575.5" y1="328.28" x2="788.5" y2="328.28" stroke="#e1e3e7" stroke-width="1"/><line x1="575.5" y1="345.17" x2="788.5" y2="345.17" stroke="#e1e3e7" stroke-width="1"/><line x1="575.5" y1="362.06" x2="788.5" y2="362.06" stroke="#e1e3e7" stroke-width="1"/><line x1="575.5" y1="378.95" x2="788.5" y2="378.95" stroke="#e1e3e7" stroke-width="1"/><line x1="575.5" y1="395.84" x2="788.5" y2="395.84" stroke="#e1e3e7" stroke-width="1"/><line x1="575.5" y1="412.73" x2="788.5" y2="412.73" stroke="#e1e3e7" stroke-width="1"/><line x1="575.5" y1="94" x2="575.5" y2="420" stroke="#dddfe3" stroke-width="1"/><line x1="785.5" y1="94" x2="785.5" y2="420" stroke="#dddfe3" stroke-width="1"/><line x1="575.5" y1="419.5" x2="785.5" y2="419.5" stroke="#dddfe3" stroke-width="1"/><line x1="575.5" y1="294.5" x2="785" y2="294.5" stroke="#50555e" stroke-width="1" stroke-dasharray="1.6,1.2"/><line x1="665" y1="94" x2="665" y2="420" stroke="#62666f" stroke-width="1" stroke-dasharray="1.6,1.4"/><polyline points="575.0,163.33 578.0,165.94 581.0,168.53 584.0,171.10 587.0,173.65 590.0,176.18 593.0,178.68 596.0,181.17 599.0,183.63 602.0,186.08 605.0,188.50 608.0,190.90 611.0,193.27 614.0,195.63 617.0,197.96 620.0,200.27 623.0,202.56 626.0,204.83 629.0,207.07 632.0,209.29 635.0,211.49 638.0,213.67 641.0,215.82 644.0,217.95 647.0,220.06 650.0,222.14 653.0,224.20 656.0,226.24 659.0,228.25 662.0,230.24 665.0,232.21 668.0,234.15 671.0,236.07 674.0,237.96 677.0,239.83 680.0,241.67 683.0,243.49 686.0,245.29 689.0,247.06 692.0,248.80 695.0,250.52 698.0,252.22 701.0,253.89 704.0,255.53 707.0,257.15 710.0,258.75 713.0,260.31 716.0,261.86 719.0,263.37 722.0,264.86 725.0,266.33 728.0,267.76 731.0,269.17 734.0,270.56 737.0,271.92 740.0,273.25 743.0,274.55 746.0,275.83 749.0,277.08 752.0,278.30 755.0,279.50 758.0,280.67 761.0,281.81 764.0,282.92 767.0,284.01 770.0,285.06 773.0,286.09 776.0,287.09 779.0,288.07 782.0,289.01 785.0,289.93" fill="none" stroke="#48b1cd" stroke-width="1.1" stroke-dasharray="2,1"/><polyline points="575.0,191.99 578.0,194.93 581.0,197.83 584.0,200.70 587.0,203.53 590.0,206.33 593.0,209.08 596.0,211.81 599.0,214.50 602.0,217.15 605.0,219.76 608.0,222.35 611.0,224.89 614.0,227.40 617.0,229.88 620.0,232.32 623.0,234.73 626.0,237.10 629.0,239.44 632.0,241.74 635.0,244.01 638.0,246.24 641.0,248.44 644.0,250.61 647.0,252.74 650.0,254.83 653.0,256.90 656.0,258.93 659.0,260.92 662.0,262.88 665.0,264.81 668.0,266.71 671.0,268.57 674.0,270.40 677.0,272.19 680.0,273.95 683.0,275.68 686.0,277.38 689.0,279.04 692.0,280.67 695.0,282.27 698.0,283.84 701.0,285.37 704.0,286.87 707.0,288.34 710.0,289.77 713.0,291.18 716.0,292.55 719.0,293.89 722.0,295.20 725.0,296.48 728.0,297.72 731.0,298.94 734.0,300.12 737.0,301.27 740.0,302.39 743.0,303.48 746.0,304.53 749.0,305.56 752.0,306.56 755.0,307.52 758.0,308.46 761.0,309.36 764.0,310.23 767.0,311.07 770.0,311.89 773.0,312.67 776.0,313.42 779.0,314.14 782.0,314.84 785.0,315.50" fill="none" stroke="#48b1cd" stroke-width="1.1" stroke-dasharray="2,1"/><polyline points="575.0,198.93 578.0,201.81 581.0,204.67 584.0,207.50 587.0,210.30 590.0,213.08 593.0,215.84 596.0,218.57 599.0,221.27 602.0,223.95 605.0,226.60 608.0,229.22 611.0,231.82 614.0,234.39 617.0,236.93 620.0,239.43 623.0,241.91 626.0,244.36 629.0,246.78 632.0,249.17 635.0,251.53 638.0,253.86 641.0,256.15 644.0,258.41 647.0,260.64 650.0,262.84 653.0,265.00 656.0,267.13 659.0,269.22 662.0,271.28 665.0,273.30 668.0,275.29 671.0,277.24 674.0,279.16 677.0,281.04 680.0,282.88 683.0,284.68 686.0,286.44 689.0,288.17 692.0,289.86 695.0,291.50 698.0,293.11 701.0,294.68 704.0,296.21 707.0,297.69 710.0,299.14 713.0,300.54 716.0,301.90 719.0,303.21 722.0,304.49 725.0,305.72 728.0,306.90 731.0,308.04 734.0,309.14 737.0,310.19 740.0,311.20 743.0,312.16 746.0,313.07 749.0,313.94 752.0,314.75 755.0,315.52 758.0,316.25 761.0,316.92 764.0,317.55 767.0,318.12 770.0,318.65 773.0,319.12 776.0,319.55 779.0,319.92 782.0,320.24 785.0,320.51" fill="none" stroke="#48b1cd" stroke-width="1.1" stroke-dasharray="2,1"/><polyline points="575.0,212.87 578.0,216.41 581.0,219.89 584.0,223.31 587.0,226.67 590.0,229.97 593.0,233.21 596.0,236.39 599.0,239.51 602.0,242.58 605.0,245.59 608.0,248.54 611.0,251.43 614.0,254.27 617.0,257.05 620.0,259.77 623.0,262.44 626.0,265.05 629.0,267.60 632.0,270.10 635.0,272.55 638.0,274.94 641.0,277.27 644.0,279.55 647.0,281.78 650.0,283.95 653.0,286.07 656.0,288.14 659.0,290.15 662.0,292.12 665.0,294.03 668.0,295.88 671.0,297.69 674.0,299.44 677.0,301.14 680.0,302.80 683.0,304.40 686.0,305.95 689.0,307.45 692.0,308.90 695.0,310.30 698.0,311.65 701.0,312.95 704.0,314.21 707.0,315.41 710.0,316.57 713.0,317.68 716.0,318.74 719.0,319.76 722.0,320.72 725.0,321.64 728.0,322.52 731.0,323.35 734.0,324.13 737.0,324.86 740.0,325.55 743.0,326.20 746.0,326.80 749.0,327.35 752.0,327.87 755.0,328.33 758.0,328.76 761.0,329.14 764.0,329.47 767.0,329.77 770.0,330.02 773.0,330.23 776.0,330.39 779.0,330.52 782.0,330.60 785.0,330.64" fill="none" stroke="#30a0c2" stroke-width="1.75"/><polyline points="575,222.5 663.5,346.5 692.8,346.5 702.8,334.3 785,334.3" fill="none" stroke="#e0463e" stroke-width="1.8" stroke-linejoin="round"/></svg>
<div class="ax" style="left:522px;width:47.5px;text-align:right;top:105.31px">220,00000</div>
<div class="ax" style="left:780px;width:50.5px;text-align:right;top:105.31px">220,00000</div>
<div class="ax" style="left:522px;width:47.5px;text-align:right;top:122.20px">200,00000</div>
<div class="ax" style="left:780px;width:50.5px;text-align:right;top:122.20px">200,00000</div>
<div class="ax" style="left:522px;width:47.5px;text-align:right;top:139.09px">180,00000</div>
<div class="ax" style="left:780px;width:50.5px;text-align:right;top:139.09px">180,00000</div>
<div class="ax" style="left:522px;width:47.5px;text-align:right;top:155.98px">160,00000</div>
<div class="ax" style="left:780px;width:50.5px;text-align:right;top:155.98px">160,00000</div>
<div class="ax" style="left:522px;width:47.5px;text-align:right;top:172.87px">140,00000</div>
<div class="ax" style="left:780px;width:50.5px;text-align:right;top:172.87px">140,00000</div>
<div class="ax" style="left:522px;width:47.5px;text-align:right;top:189.76px">120,00000</div>
<div class="ax" style="left:780px;width:50.5px;text-align:right;top:189.76px">120,00000</div>
<div class="ax" style="left:522px;width:47.5px;text-align:right;top:206.65px">100,00000</div>
<div class="ax" style="left:780px;width:50.5px;text-align:right;top:206.65px">100,00000</div>
<div class="ax" style="left:522px;width:47.5px;text-align:right;top:223.54px">80,00000</div>
<div class="ax" style="left:780px;width:50.5px;text-align:right;top:223.54px">80,00000</div>
<div class="ax" style="left:522px;width:47.5px;text-align:right;top:240.43px">60,00000</div>
<div class="ax" style="left:780px;width:50.5px;text-align:right;top:240.43px">60,00000</div>
<div class="ax" style="left:522px;width:47.5px;text-align:right;top:257.32px">40,00000</div>
<div class="ax" style="left:780px;width:50.5px;text-align:right;top:257.32px">40,00000</div>
<div class="ax" style="left:522px;width:47.5px;text-align:right;top:274.21px">20,00000</div>
<div class="ax" style="left:780px;width:50.5px;text-align:right;top:274.21px">20,00000</div>
<div class="ax" style="left:522px;width:47.5px;text-align:right;top:291.10px">0,00000</div>
<div class="ax" style="left:780px;width:50.5px;text-align:right;top:291.10px">0,00000</div>
<div class="ax" style="left:522px;width:47.5px;text-align:right;top:307.99px">-20,00000</div>
<div class="ax" style="left:780px;width:50.5px;text-align:right;top:307.99px">-20,00000</div>
<div class="ax" style="left:522px;width:47.5px;text-align:right;top:324.88px">-40,00000</div>
<div class="ax" style="left:780px;width:50.5px;text-align:right;top:324.88px">-40,00000</div>
<div class="ax" style="left:522px;width:47.5px;text-align:right;top:341.77px">-60,00000</div>
<div class="ax" style="left:780px;width:50.5px;text-align:right;top:341.77px">-60,00000</div>
<div class="ax" style="left:522px;width:47.5px;text-align:right;top:358.66px">-80,00000</div>
<div class="ax" style="left:780px;width:50.5px;text-align:right;top:358.66px">-80,00000</div>
<div class="ax" style="left:522px;width:47.5px;text-align:right;top:375.55px">-100,00000</div>
<div class="ax" style="left:780px;width:50.5px;text-align:right;top:375.55px">-100,00000</div>
<div class="ax" style="left:522px;width:47.5px;text-align:right;top:392.44px">-120,00000</div>
<div class="ax" style="left:780px;width:50.5px;text-align:right;top:392.44px">-120,00000</div>
<div class="ax" style="left:522px;width:47.5px;text-align:right;top:409.33px">-140,00000</div>
<div class="ax" style="left:780px;width:50.5px;text-align:right;top:409.33px">-140,00000</div>
<div class="ax" style="left:653.5px;top:422.5px">3000,00</div>
<div class="a" style="left:680px;top:436px;width:14px;height:2.5px;border-radius:1px;background:#cdd0d6"></div>
<div class="a" style="left:806px;top:431px;width:9px;height:1px;background:#8a8f99"></div>
<div class="a" style="left:824px;top:431px;width:9px;height:1px;background:#8a8f99"></div>
<div class="a" style="left:828px;top:427px;width:1px;height:9px;background:#8a8f99"></div>
<div class="a" style="left:2px;top:442.2px;width:836px;height:4.3px;background:#d5d7db"></div>
<div class="a" style="left:2px;top:443.8px;width:836px;height:1.5px;background:#cfd1d5"></div>
<div class="a" style="left:2px;top:446.5px;width:836px;height:2px;background:#e2e3e7"></div>
<div class="a" style="left:2px;top:448.5px;width:836px;height:14.5px;background:#f0f1f3"></div>
<div class="a" style="left:3px;top:448.5px;width:88.5px;height:14.5px;background:#d9dade"></div>
<div class="a" style="left:7px;top:449px;font-size:8.6px;line-height:12px;color:#4d525d;white-space:nowrap;letter-spacing:0.25px">Test&amp;Real positions</div>
<div class="a" style="left:97px;top:448.8px;font-size:8.6px;line-height:12px;color:#9aa0a9;white-space:nowrap">Working orders (0)</div>
<div class="btn" style="left:6.5px;top:467.5px;width:81px;height:14px;line-height:12px;font-size:8.6px;color:#505563">ADD UNDERLIER</div>
<div class="btn" style="left:591px;top:467.5px;width:67.5px;height:14px;line-height:12px;font-size:8.4px;background:#bdc8d6;border-color:#bdc8d6;color:#dce3ec">PLACE PAPER</div>
<div class="btn" style="left:663.5px;top:467.5px;width:74.5px;height:14px;line-height:12px;font-size:8.4px;color:#4a4f5b">CANCEL PAPER</div>
<div class="a" style="left:742.5px;top:467px;width:1px;height:15px;background:#c9cbd1"></div>
<div class="btn" style="left:747px;top:467.5px;width:85.5px;height:14px;line-height:12px;font-size:8.4px;color:#a9adb5;border-color:#ccced3">CLOSE POSITIONS</div>
<div class="a" style="left:3px;top:486px;width:835px;height:14px;background:#eef0f2"></div>
<div class="ph" style="left:3.5px;width:94.3px;top:486.5px">Symbol</div>
<div class="ph" style="left:98.8px;width:51.5px;top:486.5px">Strike price</div>
<div class="ph" style="left:151.3px;width:52.0px;top:486.5px">Side</div>
<div class="ph" style="left:204.3px;width:52.7px;top:486.5px;text-align:left;padding-left:4.5px">Quantity</div>
<div class="ph" style="left:258.0px;width:52.3px;top:486.5px;text-align:left;padding-left:3.0px">Open price</div>
<div class="ph" style="left:311.3px;width:52.0px;top:486.5px;text-align:left;padding-left:2.5px">Order type</div>
<div class="ph" style="left:364.3px;width:50.7px;top:486.5px">IV</div>
<div class="ph" style="left:416.0px;width:52.3px;top:486.5px">Delta</div>
<div class="ph" style="left:469.3px;width:52.0px;top:486.5px">Gamma</div>
<div class="ph" style="left:522.3px;width:51.7px;top:486.5px">Theta</div>
<div class="ph" style="left:575.0px;width:51.0px;top:486.5px">Vega</div>
<div class="ph" style="left:627.0px;width:52.2px;top:486.5px;text-align:left;padding-left:3.5px">Days to e...</div>
<div class="ph" style="left:680.2px;width:51.9px;top:486.5px">Analyse</div>
<div class="ph" style="left:733.1px;width:51.9px;top:486.5px">Place</div>
<div class="ph" style="left:786.0px;width:51.0px;top:486.5px">Remove</div>
<div class="a" style="left:2px;top:499.5px;width:836px;height:1px;background:#8db8e2"></div>
<div class="a" style="left:2px;top:500.5px;width:836px;height:56.5px;background:#f2f3f5"></div>
<svg class="a" style="left:8px;top:505px" width="8" height="5" viewBox="0 0 8 5"><path d="M0.5 0.5L4 4L7.5 0.5" fill="none" stroke="#6a6f7a" stroke-width="0.9"/></svg>
<div class="pd" style="left:18.5px;top:499.2px;font-size:8.8px;color:#555a65;transform:none">Paper positions</div>
<div class="pd" style="left:6.3px;top:514px;transform-origin:left">@ESU19C304000</div>
<div class="pd" style="left:98.3px;width:48.2px;text-align:right;top:514px;transform-origin:right">3040</div>
<div class="pd" style="left:155.3px;top:514px;transform-origin:left">Buy</div>
<div class="pd" style="left:203.8px;width:49.4px;text-align:right;top:514px;transform-origin:right">1</div>
<div class="pd" style="left:257.5px;width:49.0px;text-align:right;top:514px;transform-origin:right">30,50</div>
<div class="pd" style="left:315.3px;top:514px;transform-origin:left">Limit</div>
<div class="pd" style="left:363.8px;width:47.4px;text-align:right;top:514px;transform-origin:right">10,47%</div>
<div class="pd" style="left:415.5px;width:49.0px;text-align:right;top:514px;transform-origin:right">0,36278</div>
<div class="pd" style="left:468.8px;width:48.7px;text-align:right;top:514px;transform-origin:right">0,00298</div>
<div class="pd" style="left:521.8px;width:48.4px;text-align:right;top:514px;transform-origin:right">-0,40053</div>
<div class="pd" style="left:574.5px;width:47.7px;text-align:right;top:514px;transform-origin:right">4,51339</div>
<div class="pd" style="left:626.5px;width:48.9px;text-align:right;top:514px;transform-origin:right">59</div>
<div class="a" style="left:700.5px;top:516px;width:11px;height:11px;background:#fcfcfd;border:1px solid #d0d3d9;border-radius:1.5px"></div>
<svg class="a" style="left:701.5px;top:517px" width="9" height="9" viewBox="0 0 9 9"><path d="M1.6 4.6L3.7 7.3L7.9 1.2" fill="none" stroke="#2a6ea6" stroke-width="1"/></svg>
<div class="a" style="left:733px;top:516px;width:51px;height:10.3px;background:#bcc5d3;border-radius:2px;font-size:8.3px;line-height:12px;text-align:center;color:#d3dae4;overflow:hidden">PLACE</div>
<svg class="a" style="left:807px;top:516px" width="10" height="11" viewBox="0 0 10 11"><path d="M3.3 2.5Q5 0.6 6.7 2.5M0.3 2.5H9.7M1.5 2.5V9Q1.5 10 2.5 10H7.5Q8.5 10 8.5 9V2.5M3.5 4.5V8M5.5 4.5V8" fill="none" stroke="#a3a8b1" stroke-width="1"/></svg>
<div class="a" style="left:2px;top:527.5px;width:836px;height:1px;background:#dfe1e5"></div>
<div class="pd" style="left:6.3px;top:528px;transform-origin:left">@ESU19C305500</div>
<div class="pd" style="left:98.3px;width:48.2px;text-align:right;top:528px;transform-origin:right">3055</div>
<div class="pd" style="left:155.3px;top:528px;transform-origin:left">Sell</div>
<div class="pd" style="left:203.8px;width:49.4px;text-align:right;top:528px;transform-origin:right">-1</div>
<div class="pd" style="left:257.5px;width:49.0px;text-align:right;top:528px;transform-origin:right">24,50</div>
<div class="pd" style="left:315.3px;top:528px;transform-origin:left">Limit</div>
<div class="pd" style="left:363.8px;width:47.4px;text-align:right;top:528px;transform-origin:right">10,21%</div>
<div class="pd" style="left:415.5px;width:49.0px;text-align:right;top:528px;transform-origin:right">-0,31530</div>
<div class="pd" style="left:468.8px;width:48.7px;text-align:right;top:528px;transform-origin:right">-0,00289</div>
<div class="pd" style="left:521.8px;width:48.4px;text-align:right;top:528px;transform-origin:right">0,37008</div>
<div class="pd" style="left:574.5px;width:47.7px;text-align:right;top:528px;transform-origin:right">-4,27610</div>
<div class="pd" style="left:626.5px;width:48.9px;text-align:right;top:528px;transform-origin:right">59</div>
<div class="a" style="left:700.5px;top:530px;width:11px;height:11px;background:#fcfcfd;border:1px solid #d0d3d9;border-radius:1.5px"></div>
<svg class="a" style="left:701.5px;top:531px" width="9" height="9" viewBox="0 0 9 9"><path d="M1.6 4.6L3.7 7.3L7.9 1.2" fill="none" stroke="#2a6ea6" stroke-width="1"/></svg>
<div class="a" style="left:733px;top:530px;width:51px;height:10.3px;background:#bcc5d3;border-radius:2px;font-size:8.3px;line-height:12px;text-align:center;color:#d3dae4;overflow:hidden">PLACE</div>
<svg class="a" style="left:807px;top:530px" width="10" height="11" viewBox="0 0 10 11"><path d="M3.3 2.5Q5 0.6 6.7 2.5M0.3 2.5H9.7M1.5 2.5V9Q1.5 10 2.5 10H7.5Q8.5 10 8.5 9V2.5M3.5 4.5V8M5.5 4.5V8" fill="none" stroke="#454955" stroke-width="1"/></svg>
<div class="a" style="left:2px;top:541.5px;width:836px;height:1px;background:#dfe1e5"></div>
<div class="pd" style="left:6.3px;top:542px;transform-origin:left">@ESU19P299000</div>
<div class="pd" style="left:98.3px;width:48.2px;text-align:right;top:542px;transform-origin:right">2990</div>
<div class="pd" style="left:155.3px;top:542px;transform-origin:left">Buy</div>
<div class="pd" style="left:203.8px;width:49.4px;text-align:right;top:542px;transform-origin:right">1</div>
<div class="pd" style="left:257.5px;width:49.0px;text-align:right;top:542px;transform-origin:right">55,75</div>
<div class="pd" style="left:315.3px;top:542px;transform-origin:left">Limit</div>
<div class="pd" style="left:363.8px;width:47.4px;text-align:right;top:542px;transform-origin:right">11,91%</div>
<div class="pd" style="left:415.5px;width:49.0px;text-align:right;top:542px;transform-origin:right">-0,48280</div>
<div class="pd" style="left:468.8px;width:48.7px;text-align:right;top:542px;transform-origin:right">0,00278</div>
<div class="pd" style="left:521.8px;width:48.4px;text-align:right;top:542px;transform-origin:right">-0,48385</div>
<div class="pd" style="left:574.5px;width:47.7px;text-align:right;top:542px;transform-origin:right">4,79574</div>
<div class="pd" style="left:626.5px;width:48.9px;text-align:right;top:542px;transform-origin:right">59</div>
<div class="a" style="left:700.5px;top:544px;width:11px;height:11px;background:#fcfcfd;border:1px solid #d0d3d9;border-radius:1.5px"></div>
<svg class="a" style="left:701.5px;top:545px" width="9" height="9" viewBox="0 0 9 9"><path d="M1.6 4.6L3.7 7.3L7.9 1.2" fill="none" stroke="#2a6ea6" stroke-width="1"/></svg>
<div class="a" style="left:733px;top:544px;width:51px;height:10.3px;background:#bcc5d3;border-radius:2px;font-size:8.3px;line-height:12px;text-align:center;color:#d3dae4;overflow:hidden">PLACE</div>
<svg class="a" style="left:807px;top:544px" width="10" height="11" viewBox="0 0 10 11"><path d="M3.3 2.5Q5 0.6 6.7 2.5M0.3 2.5H9.7M1.5 2.5V9Q1.5 10 2.5 10H7.5Q8.5 10 8.5 9V2.5M3.5 4.5V8M5.5 4.5V8" fill="none" stroke="#a3a8b1" stroke-width="1"/></svg>
</body></html>
